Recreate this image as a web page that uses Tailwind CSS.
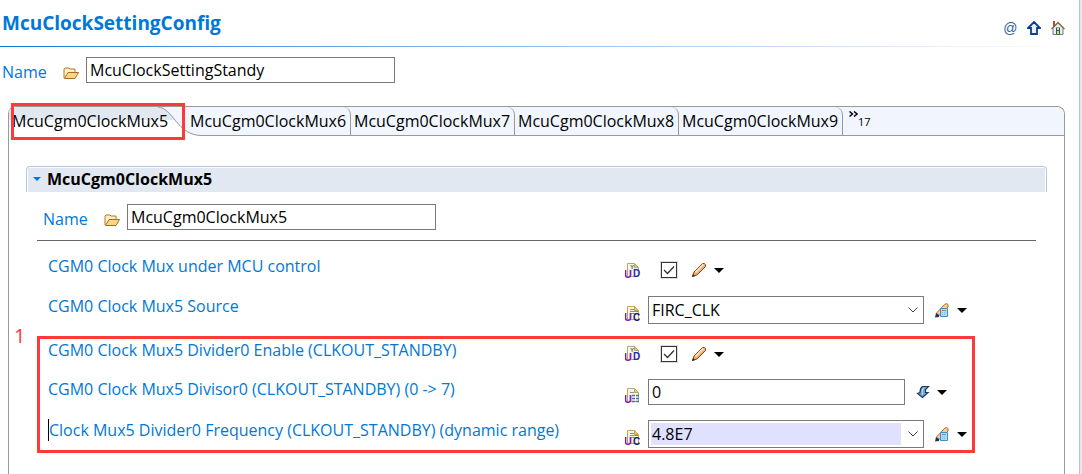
<!doctype html>
<html lang="en">
  <head>
    <meta charset="UTF-8" />
    <meta name="viewport" content="width=device-width, initial-scale=1.0" />
    <title>McuClockSettingConfig</title>
    <script src="https://cdn.jsdelivr.net/npm/@tailwindcss/browser@4"></script>
  </head>
  <body
    class="bg-white font-['Open_Sans','Noto_Sans',sans-serif] text-base leading-5 text-black"
  >
    <!-- Shared icons -->
    <svg class="hidden">
      <symbol id="folder" viewBox="0 0 16 12">
        <path d="M1 11V2L2 1h4l1 1h5v3" fill="#fdf0c0" stroke="#b07a30" />
        <path d="M1.500 11.500L5 5.500h10.500L12 11.500z" fill="#f9d588" stroke="#a86c28" />
      </symbol>
      <symbol id="page" viewBox="0 0 12 14">
        <path d="M.5 .5h7l4 4v9H.5z" fill="#fbf6e0" stroke="#c0a45c" />
        <path d="M7.500 .5v4h4z" fill="#e3c67c" stroke="#c0a45c" />
      </symbol>
      <symbol id="lines" viewBox="0 0 8 8">
        <path d="M0 .5h4M0 2.500h8M0 4.500h8" stroke="#6f93bd" />
      </symbol>
      <symbol id="pencil" viewBox="0 0 16 16">
        <path d="M1.500 14.500L3 10 11.500 1.500h2l1 1v2L6 13z" fill="#f0a868" stroke="#8a4a1c" />
        <path d="M4.500 10.500l8-8" stroke="#fde0b8" stroke-width="2" />
        <path d="M1 15l1-3 2 2z" fill="#26262e" />
      </symbol>
      <symbol id="pencil-calc" viewBox="0 0 16 16">
        <path d="M2.500 13.500L3 10.500 10.500 2.500l2-1 1.500 1V5L6 13z" fill="#f8cc94" stroke="#a86c38" />
        <path d="M1 15.500l1-4.500 3 2v2z" fill="#26305a" />
        <path d="M6.500 6.500h7v8h-7z" fill="#a8dcf8" stroke="#3f8ed0" />
        <path d="M8 8.500h2" stroke="#e86850" />
        <path d="M10 8.500h2" stroke="#62b850" />
        <path d="M8 10.500h4M8 12.500h4" stroke="#7cc0ee" stroke-dasharray="1 1" />
      </symbol>
      <symbol id="caret" viewBox="0 0 10 5">
        <path d="M0 0h10L5 5z" fill="#000" />
      </symbol>
      <symbol id="chevron" viewBox="0 0 10 6">
        <path d="M.5 .5L5 5 9.500 .5" fill="none" stroke="#444" />
      </symbol>
    </svg>

    <div class="flex min-h-screen flex-col border-r-2 border-[#e2e6f5]">
      <div class="flex flex-1 flex-col border-r border-[#c0c0c8] pr-3.5">
        <!-- Title -->
        <header class="flex h-[46px] items-center justify-between pl-0.5">
          <h1 class="text-[19px] font-bold text-[#0078d7]">McuClockSettingConfig</h1>
          <div class="flex items-center gap-2.5 pt-2.5">
            <button aria-label="References" class="w-3.5 font-['Liberation_Sans',sans-serif] text-sm leading-4 text-[#2a5f96] italic">@</button>
            <button aria-label="Up">
              <svg class="size-3.5" viewBox="0 0 14 14">
                <path d="M7 1l6 6H10v6H4V7H1z" fill="#e8f2fc" stroke="#0b3f8c" stroke-width="1.800" />
              </svg>
            </button>
            <button aria-label="Home">
              <svg class="h-4 w-3.5" viewBox="0 0 14 16">
                <path d="M2 1h2v6H2z" fill="#b44a38" />
                <path d="M2 8v6.500h10V8L7 3z" fill="#e4ecf6" stroke="#6d7f98" />
                <path d="M.5 9L7 2.500 13.500 9" fill="none" stroke="#8e6a3c" stroke-width="1.500" />
                <path d="M5 14.500v-7h4v7z" fill="#2c5a6c" />
                <path d="M6 8h2v2H6zM6 11h2v3H6z" fill="#d8e83c" />
              </svg>
            </button>
          </div>
        </header>
        <div class="h-px bg-linear-to-r from-[#0078d7] to-white"></div>

        <div class="flex items-center pt-2.5 pl-0.5">
          <label for="config-name" class="w-[61px] pt-1 text-[#0078d7]">Name</label>
          <svg class="mt-1.5 mr-[7px] h-3 w-4"><use href="#folder" /></svg>
          <input
            id="config-name"
            value="McuClockSettingStandy"
            class="h-[26px] w-[309px] border border-[#7a7a7a] px-[3px]"
          />
        </div>

        <!-- Tab folder -->
        <div class="mt-[23px] ml-2 flex-1 rounded-t-lg border-x border-t border-[#999]">
          <div role="tablist" class="relative flex h-[29px] rounded-t-lg border-b border-[#999] bg-[#f1f6fe]">
            <button role="tab" aria-selected="true" class="relative w-[178px] pl-[3px] text-left">
              <svg class="absolute top-0 left-0 h-[29px] w-48" viewBox="0 0 192 29">
                <path d="M0 29V7Q0 0 7 0H149C162 0 168 28 192 28.500V29z" fill="#fff" />
                <path d="M0 13V7Q0 0 7 0H149C158 1 163 8 167 13z" fill="#e1e8f1" />
                <path d="M149 0C164 1 168 28 192 28.500" fill="none" stroke="#999" />
              </svg>
              <span class="relative">McuCgm0ClockMux5</span>
            </button>
            <button role="tab" class="relative w-41 rounded-tr-lg border-r border-[#999] pl-[3px] text-left">McuCgm0ClockMux6</button>
            <button role="tab" class="w-41 rounded-tr-lg border-r border-[#999] pl-[3px] text-left">McuCgm0ClockMux7</button>
            <button role="tab" class="w-41 rounded-tr-lg border-r border-[#999] pl-[3px] text-left">McuCgm0ClockMux8</button>
            <button role="tab" class="w-41 rounded-tr-lg border-r border-[#999] pl-[3px] text-left">McuCgm0ClockMux9</button>
            <button aria-label="17 more tabs" class="flex pl-1.5">
              <svg class="mt-1 h-[7px] w-[9px]" viewBox="0 0 9 7">
                <path d="M.5 .5l3 2.500-3 2.500M5 .5l3 2.500-3 2.500" fill="none" stroke="#000" stroke-width="1.500" />
              </svg>
              <span class="pt-[7px] text-[11px] leading-4">17</span>
            </button>
            <div class="pointer-events-none absolute -top-1 left-0.5 h-[37px] w-[174px] border-3 border-[#ff3838]"></div>
          </div>

          <!-- Section -->
          <section class="mt-[30px] mr-[17px] ml-[17px]">
            <div class="rounded-t-sm border-x border-t border-[#b5c7de] px-px pt-px">
              <h2 class="flex h-6 items-center gap-1.5 bg-[#e1e8f1] pb-0.5 pl-[5px] font-bold">
                <svg class="h-1 w-2" viewBox="0 0 8 4"><path d="M0 0h8L4 4z" fill="#0078d7" /></svg>
                McuCgm0ClockMux5
              </h2>
            </div>

            <div class="mr-[11px] ml-[11px] flex items-center border-b border-[#666] pt-3 pb-2.5 pl-1.5">
              <label for="mux-name" class="w-[61px] pt-1 text-[#0078d7]">Name</label>
              <svg class="mt-1.5 mr-[7px] h-3 w-4"><use href="#folder" /></svg>
              <input
                id="mux-name"
                value="McuCgm0ClockMux5"
                class="h-[26px] w-[309px] border border-[#7a7a7a] px-[3px]"
              />
            </div>

            <div class="mt-[9px] ml-[22px]">
              <div class="flex h-10 items-center">
                <label for="mux-control" class="w-[577px] pb-2 text-[#0078d7]">CGM0 Clock Mux under MCU control</label>
                <svg class="mt-0.5 mr-5 size-4" viewBox="0 0 16 16">
                  <use href="#page" x="2" width="12" height="14" />
                  <text x="5" y="6" font-family="Liberation Sans" font-size="6" font-weight="bold" fill="#2c6090">Y</text>
                  <text x="-1" y="15" font-family="Liberation Sans" font-size="11" font-weight="bold" fill="#8a10b8">U</text>
                  <text x="8" y="14" font-family="Liberation Sans" font-size="10" font-weight="bold" fill="#1a2cc0">D</text>
                </svg>
                <span class="relative flex">
                  <input id="mux-control" type="checkbox" checked class="h-4 w-4 appearance-none border border-[#333] bg-white outline-1 outline-[#ddd]" />
                  <svg class="pointer-events-none absolute inset-0 size-4" viewBox="0 0 16 16"><path d="M3 8l3.500 3.500L13 4.500" fill="none" stroke="#333" stroke-width="1.300" /></svg>
                </span>
                <button aria-label="Edit" class="ml-3.5"><svg class="size-4"><use href="#pencil" /></svg></button>
                <button aria-label="Edit options" class="ml-[7px]"><svg class="h-[5px] w-2.5"><use href="#caret" /></svg></button>
              </div>

              <div class="flex h-10 items-center">
                <label for="mux-source" class="w-[577px] pb-2 text-[#0078d7]">CGM0 Clock Mux5 Source</label>
                <svg class="mt-2 mr-[7px] size-4" viewBox="0 0 16 16">
                  <use href="#page" x="2" width="12" height="14" />
                  <use href="#lines" x="5" y="3" width="8" height="8" />
                  <text x="-1" y="15" font-family="Liberation Sans" font-size="11" font-weight="bold" fill="#8a10b8">U</text>
                  <text x="8" y="15" font-family="Liberation Sans" font-size="10" font-weight="bold" fill="#101c80">C</text>
                </svg>
                <span class="relative flex h-7 w-[276px] border border-[#7a7a7a] p-0.5">
                  <select id="mux-source" class="w-[250px] appearance-none bg-white pl-px"><option>FIRC_CLK</option></select>
                  <svg class="pointer-events-none absolute top-2.5 right-[5px] h-1.5 w-2.5"><use href="#chevron" /></svg>
                </span>
                <button aria-label="Edit" class="ml-2.5"><svg class="size-4"><use href="#pencil-calc" /></svg></button>
                <button aria-label="Edit options" class="ml-[7px]"><svg class="h-[5px] w-2.5"><use href="#caret" /></svg></button>
              </div>

              <!-- Highlighted group -->
              <div class="relative mt-1">
                <div class="flex h-10 items-center">
                  <label for="div-enable" class="w-[577px] pb-2 text-[#0078d7]">CGM0 Clock Mux5 Divider0 Enable (CLKOUT_STANDBY)</label>
                  <svg class="mr-5 size-4" viewBox="0 0 16 16">
                    <use href="#page" x="2" width="12" height="14" />
                    <text x="5" y="6" font-family="Liberation Sans" font-size="6" font-weight="bold" fill="#2c6090">Y</text>
                    <text x="-1" y="15" font-family="Liberation Sans" font-size="11" font-weight="bold" fill="#8a10b8">U</text>
                    <text x="8" y="14" font-family="Liberation Sans" font-size="10" font-weight="bold" fill="#1a2cc0">D</text>
                  </svg>
                  <span class="relative flex">
                    <input id="div-enable" type="checkbox" checked class="h-4 w-4 appearance-none border border-[#333] bg-white outline-1 outline-[#ddd]" />
                    <svg class="pointer-events-none absolute inset-0 size-4" viewBox="0 0 16 16"><path d="M3 8l3.500 3.500L13 4.500" fill="none" stroke="#333" stroke-width="1.300" /></svg>
                  </span>
                  <button aria-label="Edit" class="ml-3.5"><svg class="size-4"><use href="#pencil" /></svg></button>
                  <button aria-label="Edit options" class="ml-[7px]"><svg class="h-[5px] w-2.5"><use href="#caret" /></svg></button>
                </div>

                <div class="flex h-9 items-center">
                  <label for="divisor" class="w-[577px] pb-1.5 text-[#0078d7]">CGM0 Clock Mux5 Divisor0 (CLKOUT_STANDBY) (0 -&gt; 7)</label>
                  <svg class="mt-2 mr-[7px] size-4" viewBox="0 0 16 16">
                    <use href="#page" x="2" width="12" height="14" />
                    <path d="M5 4.500h4" stroke="#6f93bd" />
                    <path d="M7 7.500h7M7 10.500h7M7 13.500h7" stroke="#4a74a8" stroke-width="1.500" stroke-dasharray="3 1" />
                    <text x="-1" y="15" font-family="Liberation Sans" font-size="11" font-weight="bold" fill="#8a10b8">U</text>
                  </svg>
                  <input id="divisor" value="0" class="h-[26px] w-[257px] border border-[#7a7a7a] px-[3px]" />
                  <button aria-label="Calculate" class="ml-[11px]">
                    <svg class="size-3.5" viewBox="0 0 14 14">
                      <path d="M6.500 1.500h6L9.500 4.500 9.500 7.500h2.500L6.500 12.500 1.500 8.500 4 7.500C4 4.500 5 2.500 6.500 1.500z" fill="#7ba6cf" stroke="#173a66" stroke-width="1.200" />
                      <path d="M7.500 3C6 5 6 7 6.500 9.500" fill="none" stroke="#cfe2f4" />
                    </svg>
                  </button>
                  <button aria-label="Calculate options" class="ml-[7px]"><svg class="h-[5px] w-2.5"><use href="#caret" /></svg></button>
                </div>

                <div class="flex h-12 items-center">
                  <div class="w-[577px] pb-2">
                    <label for="frequency" class="border-l border-black text-[#0078d7]">Clock Mux5 Divider0 Frequency (CLKOUT_STANDBY) (dynamic range)</label>
                  </div>
                  <svg class="mt-2 mr-[7px] size-4" viewBox="0 0 16 16">
                    <use href="#page" x="2" width="12" height="14" />
                    <use href="#lines" x="5" y="3" width="8" height="8" />
                    <text x="-1" y="15" font-family="Liberation Sans" font-size="11" font-weight="bold" fill="#8a10b8">U</text>
                    <text x="8" y="15" font-family="Liberation Sans" font-size="10" font-weight="bold" fill="#101c80">C</text>
                  </svg>
                  <span class="relative flex h-7 w-[276px] border border-[#7a7a7a] p-0.5">
                    <select id="frequency" class="w-[250px] appearance-none bg-[#e0e0ff] pl-px"><option>4.8E7</option></select>
                    <svg class="pointer-events-none absolute top-2.5 right-[5px] h-1.5 w-2.5"><use href="#chevron" /></svg>
                  </span>
                  <button aria-label="Edit" class="ml-2.5"><svg class="size-4"><use href="#pencil-calc" /></svg></button>
                  <button aria-label="Edit options" class="ml-[7px]"><svg class="h-[5px] w-2.5"><use href="#caret" /></svg></button>
                </div>

                <div class="pointer-events-none absolute top-0.5 -left-[11px] h-[117px] w-[938px] border-3 border-[#ff3838]"></div>
                <span class="absolute -top-2.5 -left-[34px] text-xl leading-6 text-[#ff3838]">1</span>
              </div>
            </div>
          </section>
        </div>
      </div>
    </div>
  </body>
</html>
